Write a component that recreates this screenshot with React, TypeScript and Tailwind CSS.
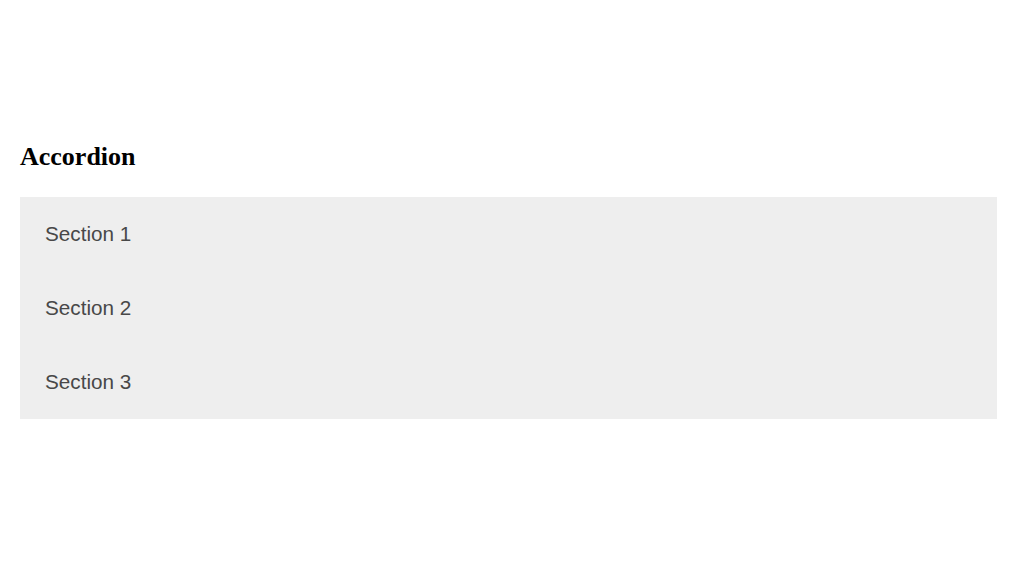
const SECTIONS = ["Section 1", "Section 2", "Section 3"]

export default function App() {
  return (
    <div className="min-h-screen w-[1024px] bg-white pt-[142px]">
      <h3 className="ml-[20px] text-[26px] leading-[30px] font-bold text-black font-['Liberation_Serif',serif]">
        Accordion
      </h3>
      <div className="mt-[25px] ml-[20px] w-[977px] bg-[#eeeeee]">
        {SECTIONS.map((label) => (
          <button
            key={label}
            className="flex h-[74px] w-full items-center px-[25px] text-left text-[20.7px] text-[#484848] font-['Liberation_Sans',Arial,sans-serif]"
          >
            {label}
          </button>
        ))}
      </div>
    </div>
  )
}
